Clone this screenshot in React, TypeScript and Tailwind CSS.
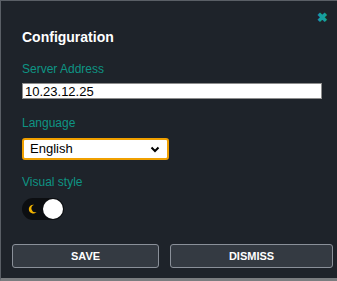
import React, { useState } from 'react';

const ConfigDialog: React.FC = () => {
  const [address, setAddress] = useState('10.23.12.25');
  const [lang, setLang] = useState('English');
  const [dark, setDark] = useState(true);

  return (
    <div className="w-[337px] h-[281px] bg-[#1e232a] border-t border-l border-[#5a5f66] border-b-[3px] border-b-[#7a7d80] font-['Liberation_Sans',Arial,sans-serif] relative flex flex-col">
      {/* close */}
      <button className="absolute right-[9px] top-[10px] text-[#169e9e] text-[13px] font-bold leading-none">✖</button>

      <div className="pl-[21px] pr-[15px] pt-[28px]">
        <h2 className="text-white text-[14px] font-bold leading-[16px]">Configuration</h2>

        <label className="block mt-[17px] text-[#0e9484] text-[12px] leading-[14px]">Server Address</label>
        <input
          value={address}
          onChange={e => setAddress(e.target.value)}
          className="mt-[7px] block w-[300px] h-[16px] bg-white border border-[#8c8c8c] px-[2px] text-[13px] leading-[14px] text-black outline-none"
        />

        <label className="block mt-[17px] text-[#0e9484] text-[12px] leading-[14px]">Language</label>
        <div className="mt-[8px] relative w-[147px] h-[22px] rounded-[3px] border-2 border-[#f0a000] bg-white">
          <select
            value={lang}
            onChange={e => setLang(e.target.value)}
            className="appearance-none block w-full h-[18px] bg-transparent pl-[6px] py-0 text-[13px] leading-[18px] text-black outline-none"
          >
            <option>English</option>
            <option>Deutsch</option>
            <option>Français</option>
          </select>
          <svg className="absolute right-[7px] top-[6px] pointer-events-none" width="10" height="7" viewBox="0 0 10 7">
            <path d="M1.5 1.5 L5 5 L8.5 1.5" stroke="#000" strokeWidth="2" fill="none" />
          </svg>
        </div>

        <label className="block mt-[15px] text-[#0e9484] text-[12px] leading-[14px]">Visual style</label>
        <button
          onClick={() => setDark(!dark)}
          className="mt-[9px] relative w-[42px] h-[22px] rounded-full bg-[#0c0e11] block"
        >
          <svg className="absolute left-[6px] top-[6px]" width="9" height="10" viewBox="0 0 9 10">
            <path d="M6 0.8 A4.4 4.4 0 1 0 8.6 8 A3.6 3.6 0 0 1 6 0.8 Z" fill="#f2b300" />
          </svg>
          <span className="absolute right-[1px] top-[1px] w-[20px] h-[20px] rounded-full bg-white" />
        </button>
      </div>

      {/* footer buttons */}
      <div className="mt-auto pl-[11px] pb-[10px] flex gap-[11px]">
        <button className="w-[147px] h-[24px] rounded-[3px] border border-[#8a9099] bg-[#343a42] text-white text-[11px] font-bold">SAVE</button>
        <button className="w-[163px] h-[24px] rounded-[3px] border border-[#8a9099] bg-[#343a42] text-white text-[11px] font-bold">DISMISS</button>
      </div>
    </div>
  );
};

export default function App() {
  return <ConfigDialog />;
}
